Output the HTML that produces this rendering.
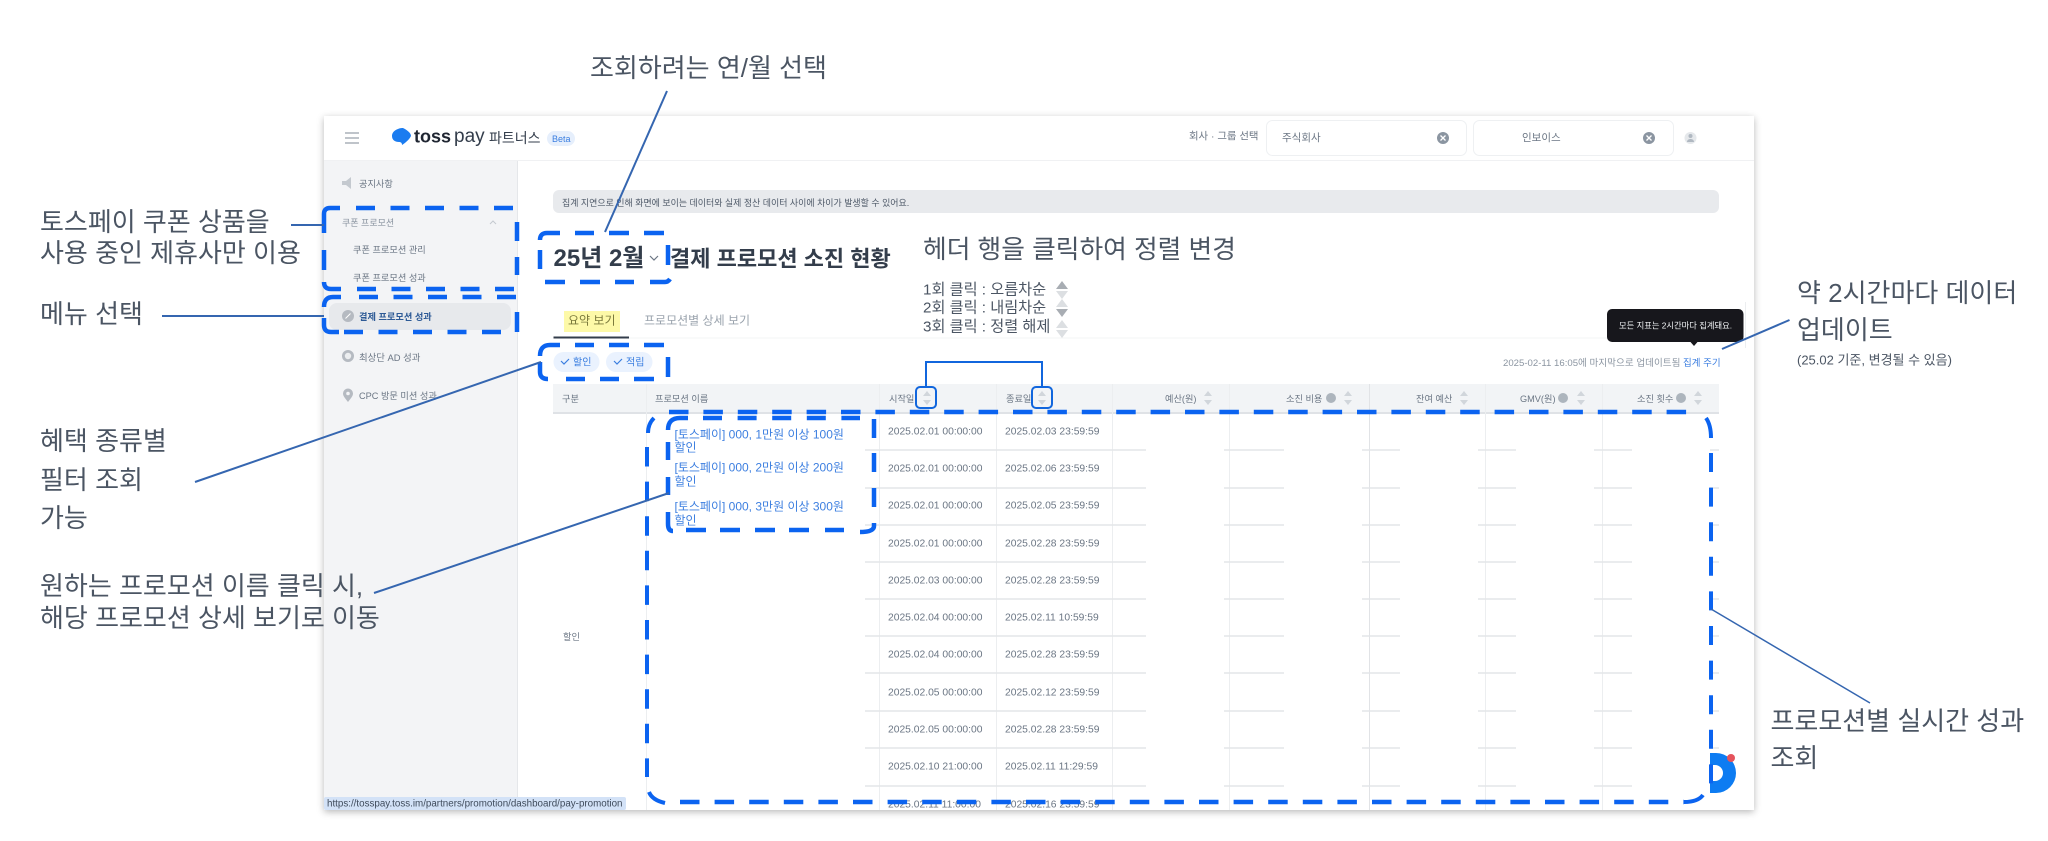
<!DOCTYPE html>
<html lang="ko"><head><meta charset="utf-8"><title>결제 프로모션 소진 현황</title>
<style>
html,body{margin:0;padding:0;width:2048px;height:841px;overflow:hidden;background:#fff}
body{position:relative;font-family:"Liberation Sans","Noto Sans CJK KR",sans-serif;color:#4e5968}
.t{position:absolute;white-space:nowrap;transform:translateY(calc(-50% + 1.5px));line-height:1.2}
.a{font-size:26px;color:#4b5563}
#win{position:absolute;left:324px;top:116px;width:1430px;height:694px;background:#fff;box-shadow:0 2px 7px rgba(0,0,0,.28)}
#blur{position:absolute;left:0;top:0;width:2048px;height:841px;filter:blur(.35px)}
#blur .t{color:#6b7684;font-size:11px}
.n{color:#3d7fe0!important;font-size:12px!important}
.d{font-size:10.3px!important;color:#6b7684}
svg{position:absolute;left:0;top:0}
</style></head><body>
<div id="win"></div>
<div id="blur">
<svg width="2048" height="841" viewBox="0 0 2048 841">
<defs>
<g id="s"><polygon points="-4,-2 4,-2 0,-7" fill="#d1d6db"/><polygon points="-4,2 4,2 0,7" fill="#d1d6db"/></g>
<path id="r" d="M865 0H1146M1224 0H1284M1362 0H1400M1478 0H1516M1594 0H1632M1710 0H1719" stroke="#e3e5e8" stroke-width="1.5" fill="none"/>
</defs>
<rect x="324" y="160" width="193" height="650" fill="#f3f4f6"/>
<path d="M517.500 160V810" stroke="#e5e7ea"/>
<path d="M324 160.500H1754" stroke="#f0f1f3"/>
<rect x="329" y="303" width="182" height="27" rx="8" fill="#e7e9ec"/>
<path d="M345 133H359M345 138H359M345 143H359" stroke="#bfc4ca" stroke-width="2"/>
<path d="M403 128C407 130 411 133 411 136C409 140 405 143 402 145C402 143 401 142 399 142C395 142 392 140 392 136C392 131 398 128 403 128Z" fill="#1b7cf0"/>
<rect x="547" y="131" width="28" height="15" rx="7.500" fill="#e6effc"/>
<rect x="1266.500" y="120.500" width="200" height="35" rx="6" fill="#fff" stroke="#eef0f2"/>
<rect x="1473.500" y="120.500" width="200" height="35" rx="6" fill="#fff" stroke="#eef0f2"/>
<circle cx="1443" cy="138" r="6" fill="#8b95a1"/><path d="M1440.500 135.500l5 5m0-5l-5 5" stroke="#fff" stroke-width="1.300"/>
<circle cx="1649" cy="138" r="6" fill="#8b95a1"/><path d="M1646.500 135.500l5 5m0-5l-5 5" stroke="#fff" stroke-width="1.300"/>
<circle cx="1690.500" cy="138" r="6" fill="#e5e8eb"/><circle cx="1690.500" cy="136" r="2" fill="#b0b8c1"/><path d="M1687 142c0-4 7-4 7 0z" fill="#b0b8c1"/>
<path d="M342 181h4l5-4v12l-5-4h-4z" fill="#c4c9cf"/>
<path d="M490 224l3-3 3 3" stroke="#c4c9cf" fill="none"/>
<circle cx="348" cy="316" r="6" fill="#b5bac1"/><path d="M345.500 318.500l5-5" stroke="#fff"/>
<circle cx="348" cy="356" r="6" fill="#b5bac1"/><circle cx="348" cy="356" r="3.200" fill="#eceef0"/>
<path d="M348 402c-3-4-5-6-5-8.500a5 5 0 0 1 10 0c0 2.500-2 4.500-5 8.500z" fill="#b5bac1"/><circle cx="348" cy="393.500" r="1.800" fill="#f3f4f6"/>
<rect x="553" y="190" width="1166" height="23" rx="6" fill="#e8eaed"/>
<path d="M650 256l4 4 4-4" stroke="#6b7684" fill="none" stroke-width="1.200"/>
<rect x="564" y="311" width="56" height="21" fill="#fdf9a8"/>
<path d="M553.500 338H1719" stroke="#f3f4f6"/>
<path d="M553.500 337.500H629" stroke="#333d4b" stroke-width="2"/>
<rect x="553.500" y="352" width="46" height="20" rx="10" fill="#eaf2fe"/>
<rect x="606" y="352" width="46.500" height="20" rx="10" fill="#eaf2fe"/>
<path d="M561 361l3 3 5-5M614 361l3 3 5-5" stroke="#3a7ee0" fill="none" stroke-width="1.200"/>
<polygon points="1062,281 1068,289 1056,289" fill="#a8adb3"/><polygon points="1062,299 1068,291 1056,291" fill="#dcdfe2"/>
<polygon points="1062,299 1068,307 1056,307" fill="#dcdfe2"/><polygon points="1062,317 1068,309 1056,309" fill="#a8adb3"/>
<polygon points="1062,320 1068,328 1056,328" fill="#dcdfe2"/><polygon points="1062,338 1068,330 1056,330" fill="#dcdfe2"/>
<rect x="553" y="384" width="1166" height="29" fill="#f2f4f6"/>
<path d="M553 413H1719" stroke="#dfe2e6" stroke-width="2"/>
<path d="M646.500 384V810M879.500 384V810M996.500 384V810M1112.500 384V810M1229.500 384V810M1485.500 384V810M1602.500 384V810" stroke="#eceef0"/>
<path d="M1369.500 384V810" stroke="#e1e3e6"/>
<use href="#r" y="450"/><use href="#r" y="488"/><use href="#r" y="525"/><use href="#r" y="562"/><use href="#r" y="599"/><use href="#r" y="636"/><use href="#r" y="673"/><use href="#r" y="711"/><use href="#r" y="748"/><use href="#r" y="786"/>
<use href="#s" x="927" y="398"/><use href="#s" x="1042" y="398"/><use href="#s" x="1208" y="398"/><use href="#s" x="1348" y="398"/><use href="#s" x="1464" y="398"/><use href="#s" x="1581" y="398"/><use href="#s" x="1698" y="398"/>
<circle cx="1331" cy="398" r="5" fill="#adb5bd"/><circle cx="1563" cy="398" r="5" fill="#adb5bd"/><circle cx="1681" cy="398" r="5" fill="#adb5bd"/>
<path d="M1710 753H1716A20 20 0 0 1 1716 793H1710V781H1715A8 8 0 0 0 1715 765H1710Z" fill="#0d7cf2"/>
<circle cx="1731" cy="758" r="4" fill="#e5535c"/>
<rect x="1607" y="309" width="136.500" height="33" rx="5" fill="#17171c"/>
<polygon points="1690.500,342 1697.500,342 1694,346" fill="#17171c"/>
<path d="M1745.500 302V348" stroke="#eceef0"/>
</svg>

<div class="t" style="left:414px;top:136px;font-size:18px;font-weight:700;color:#202632!important">toss</div>
<div class="t" style="left:454px;top:136px;font-size:19px;color:#333d4b!important">pay</div>
<div class="t" style="left:489px;top:137px;font-size:14px;color:#333d4b!important">파트너스</div>
<div class="t" style="left:552px;top:137.500px;font-size:9px!important;color:#3a7ee0!important">Beta</div>
<div class="t" style="left:1189px;top:136px;font-size:10.400px">회사 · 그룹 선택</div>
<div class="t" style="left:1282px;top:137px;font-size:10.500px">주식회사</div>
<div class="t" style="left:1522px;top:137px;font-size:10.500px">인보이스</div>

<div class="t" style="left:359px;top:183px;font-size:9.200px">공지사항</div>
<div class="t" style="left:342px;top:222px;font-size:9px;color:#8b95a1">쿠폰 프로모션</div>
<div class="t" style="left:353px;top:249px;font-size:9.200px">쿠폰 프로모션 관리</div>
<div class="t" style="left:353px;top:277px;font-size:9.200px">쿠폰 프로모션 성과</div>
<div class="t" style="left:359px;top:316px;font-size:9.200px;color:#2d5a96;font-weight:700">결제 프로모션 성과</div>
<div class="t" style="left:359px;top:356px;font-size:9.400px">최상단 AD 성과</div>
<div class="t" style="left:359px;top:395px;font-size:9.200px">CPC 방문 미션 성과</div>

<div class="t" style="left:562px;top:202px;font-size:8.950px;color:#4e5968">집계 지연으로 인해 화면에 보이는 데이터와 실제 정산 데이터 사이에 차이가 발생할 수 있어요.</div>
<div class="t" style="left:553.500px;top:258px;font-size:24px;font-weight:700;color:#333d4b">25년 2월</div>
<div class="t" style="left:670px;top:258px;font-size:22px;font-weight:700;color:#333d4b">결제 프로모션 소진 현황</div>
<div class="t" style="left:923px;top:249px;font-size:25.750px;color:#4b5563">헤더 행을 클릭하여 정렬 변경</div>
<div class="t" style="left:923px;top:289px;font-size:15.200px;color:#4b5563">1회 클릭 : 오름차순</div>
<div class="t" style="left:923px;top:307px;font-size:15.200px;color:#4b5563">2회 클릭 : 내림차순</div>
<div class="t" style="left:923px;top:326px;font-size:15.200px;color:#4b5563">3회 클릭 : 정렬 해제</div>
<div class="t" style="left:568px;top:319px;font-size:12px;color:#7b7a3c">요약 보기</div>
<div class="t" style="left:644px;top:319px;font-size:12px;color:#9aa3ad">프로모션별 상세 보기</div>
<div class="t" style="left:573px;top:361.500px;font-size:10px;color:#3a7ee0">할인</div>
<div class="t" style="left:626px;top:361.500px;font-size:10px;color:#3a7ee0">적립</div>
<div class="t" style="left:1503px;top:361.500px;font-size:9.600px;color:#8b95a1">2025-02-11 16:05에 마지막으로 업데이트됨</div>
<div class="t" style="left:1683px;top:361.500px;font-size:9.500px;color:#3d7fe0">집계 주기</div>
<div class="t" style="left:1619px;top:325px;font-size:8.300px;color:#f2f4f6">모든 지표는 2시간마다 집계돼요.</div>

<div class="t" style="left:562px;top:398px;font-size:9.200px">구분</div>
<div class="t" style="left:655px;top:398px;font-size:9.200px">프로모션 이름</div>
<div class="t" style="left:889px;top:398px;font-size:9.200px">시작일</div>
<div class="t" style="left:1006px;top:398px;font-size:9.200px">종료일</div>
<div class="t" style="left:1165px;top:398px;font-size:9.200px">예산(원)</div>
<div class="t" style="left:1286px;top:398px;font-size:9.200px">소진 비용</div>
<div class="t" style="left:1416px;top:398px;font-size:9.200px">잔여 예산</div>
<div class="t" style="left:1520px;top:398px;font-size:9.200px">GMV(원)</div>
<div class="t" style="left:1637px;top:398px;font-size:9.200px">소진 횟수</div>
<div class="t" style="left:563px;top:635.500px;font-size:9.200px">할인</div>

<div class="t n" style="left:674.500px;top:433px">[토스페이] 000, 1만원 이상 100원</div><div class="t n" style="left:674.500px;top:446px">할인</div>
<div class="t n" style="left:674.500px;top:466px">[토스페이] 000, 2만원 이상 200원</div><div class="t n" style="left:674.500px;top:480px">할인</div>
<div class="t n" style="left:674.500px;top:505px">[토스페이] 000, 3만원 이상 300원</div><div class="t n" style="left:674.500px;top:519px">할인</div>

<div class="t d" style="left:888px;top:431px">2025.02.01 00:00:00</div><div class="t d" style="left:1005px;top:431px">2025.02.03 23:59:59</div>
<div class="t d" style="left:888px;top:468px">2025.02.01 00:00:00</div><div class="t d" style="left:1005px;top:468px">2025.02.06 23:59:59</div>
<div class="t d" style="left:888px;top:505px">2025.02.01 00:00:00</div><div class="t d" style="left:1005px;top:505px">2025.02.05 23:59:59</div>
<div class="t d" style="left:888px;top:542.500px">2025.02.01 00:00:00</div><div class="t d" style="left:1005px;top:542.500px">2025.02.28 23:59:59</div>
<div class="t d" style="left:888px;top:580px">2025.02.03 00:00:00</div><div class="t d" style="left:1005px;top:580px">2025.02.28 23:59:59</div>
<div class="t d" style="left:888px;top:617px">2025.02.04 00:00:00</div><div class="t d" style="left:1005px;top:617px">2025.02.11 10:59:59</div>
<div class="t d" style="left:888px;top:654px">2025.02.04 00:00:00</div><div class="t d" style="left:1005px;top:654px">2025.02.28 23:59:59</div>
<div class="t d" style="left:888px;top:691.500px">2025.02.05 00:00:00</div><div class="t d" style="left:1005px;top:691.500px">2025.02.12 23:59:59</div>
<div class="t d" style="left:888px;top:729px">2025.02.05 00:00:00</div><div class="t d" style="left:1005px;top:729px">2025.02.28 23:59:59</div>
<div class="t d" style="left:888px;top:766px">2025.02.10 21:00:00</div><div class="t d" style="left:1005px;top:766px">2025.02.11 11:29:59</div>
<div class="t d" style="left:888px;top:804px">2025.02.11 11:00:00</div><div class="t d" style="left:1005px;top:804px">2025.02.16 23:59:59</div>

<svg width="2048" height="841" viewBox="0 0 2048 841"><rect x="324" y="797" width="302" height="13" rx="2" fill="#d3e2f7"/></svg>
<div class="t" style="left:327px;top:802.500px;font-size:9.800px;color:#3f4b5b">https://tosspay.toss.im/partners/promotion/dashboard/pay-promotion</div>

<div class="t a" style="left:590px;top:67px;color:#4b5563;font-size:26px">조회하려는 연/월 선택</div>
<div class="t a" style="left:40px;top:221px;color:#4b5563;font-size:26px">토스페이 쿠폰 상품을</div>
<div class="t a" style="left:40px;top:252px;color:#4b5563;font-size:26px">사용 중인 제휴사만 이용</div>
<div class="t a" style="left:40px;top:313px;color:#4b5563;font-size:26px">메뉴 선택</div>
<div class="t a" style="left:40px;top:440px;color:#4b5563;font-size:26px">혜택 종류별</div>
<div class="t a" style="left:40px;top:479px;color:#4b5563;font-size:26px">필터 조회</div>
<div class="t a" style="left:40px;top:517px;color:#4b5563;font-size:26px">가능</div>
<div class="t a" style="left:40px;top:585px;color:#4b5563;font-size:26px">원하는 프로모션 이름 클릭 시,</div>
<div class="t a" style="left:40px;top:617px;color:#4b5563;font-size:26px">해당 프로모션 상세 보기로 이동</div>
<div class="t a" style="left:1797px;top:292px;color:#4b5563;font-size:26px">약 2시간마다 데이터</div>
<div class="t a" style="left:1797px;top:329px;color:#4b5563;font-size:26px">업데이트</div>
<div class="t" style="left:1797px;top:359px;font-size:13px;color:#4b5563">(25.02 기준, 변경될 수 있음)</div>
<div class="t a" style="left:1770.500px;top:720px;color:#4b5563;font-size:26px">프로모션별 실시간 성과</div>
<div class="t a" style="left:1770.500px;top:757px;color:#4b5563;font-size:26px">조회</div>

<svg width="2048" height="841" viewBox="0 0 2048 841" fill="none">
<g stroke="#0b63f0" stroke-width="4.500">
<path d="M324 233V214Q324 208 330 208H340M324 250V270M324 282Q324 289 331 289H341"/>
<path d="M356 208H514" stroke-dasharray="19 15.500"/>
<path d="M357 289H514" stroke-dasharray="19 15.500"/>
<path d="M517 222V241M517 257V275"/>
<path d="M324 307Q324 297 333 297H341M324 318V325Q324 332 331 332H339"/>
<path d="M359 297H516" stroke-dasharray="19 15.500"/>
<path d="M344 332H503" stroke-dasharray="19 15.500"/>
<path d="M517 312V332"/>
<path d="M540 240Q540 233 547 233H560M575 233H594M609 233H629M644 233H664"/>
<path d="M540 250V269M668 245V265"/>
<path d="M545 282H565M580 282H600M615 282H634M650 282H665Q668 282 670 279"/>
<path d="M540 356Q540 345 550 345H560M575 345H594M609 345H629M644 345H664"/>
<path d="M540 362V372Q540 379 548 379M566 379H585M600 379H619M634 379H654M668 357V377"/>
<path d="M668 430Q668 418 680 418H688"/>
<path d="M703 418H860" stroke-dasharray="19 15.600"/>
<path d="M874 419V438M874 453V472M874 488V507M874 523V526Q874 532 860 532"/>
<path d="M668 442V460M668 477V495M668 512V524Q668 531 673 531"/>
<path d="M686 530H706M720 530H740M755 530H775M789 530H809M825 530H844"/>
<path d="M669 412H1692" stroke-dasharray="19.500 14.900"/>
<path d="M680 802H1684" stroke-dasharray="19.500 15.100"/>
</g>
<g stroke="#0b63f0" stroke-width="4">
<path d="M648 433Q648 424 654 418"/>
<path d="M1706 418Q1711 425 1711 438"/>
<path d="M1711 453V785" stroke-dasharray="19 15.600"/>
<path d="M647 447V777" stroke-dasharray="19.500 15.100"/>
<path d="M649 792Q652 800 665 803"/>
<path d="M1684 802Q1698 802 1703 795"/>
</g>
<g stroke="#1166dd" stroke-width="2">
<rect x="916" y="387" width="20" height="21" rx="4"/>
<rect x="1032" y="387" width="20" height="21" rx="4"/>
<path d="M926 387V362H1042V387"/>
</g>
<g stroke="#3566b0" stroke-width="2">
<path d="M667 91L605 232"/>
<path d="M291 225H324"/>
<path d="M162 316H324"/>
<path d="M195 482L541 362"/>
<path d="M374 593L669 493"/>
<path d="M1722 349L1789.500 320"/>
<path d="M1711 609L1870 703" stroke-width="1.500"/>
</g>
</svg>
</div>
</body></html>
